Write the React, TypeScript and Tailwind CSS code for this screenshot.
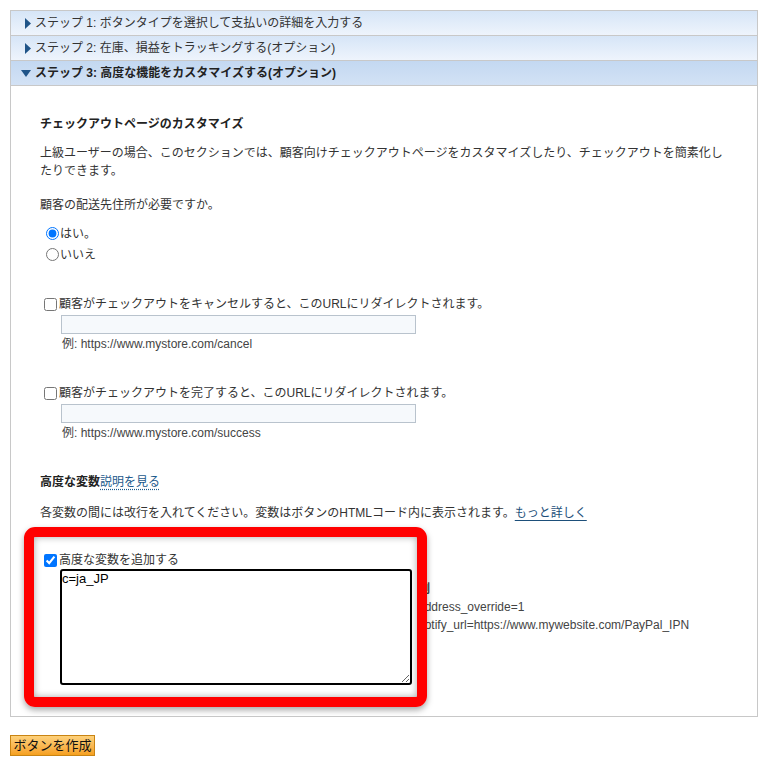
import { useState } from 'react';

const font = "font-['Liberation_Sans','Noto_Sans_CJK_JP',sans-serif]";

function StepHeader({ label, open = false }: { label: string; open?: boolean }) {
  return (
    <div
      className={`flex h-[25px] items-center border-b border-[#c8c8c8] text-[12px] ${
        open
          ? 'bg-gradient-to-b from-[#c3d8f1] to-[#d3e2f5] pl-[10px] font-bold text-[#222]'
          : 'bg-gradient-to-b from-[#d6e5f7] to-[#eef4fc] pl-[14px] text-[#333]'
      }`}
    >
      {open ? (
        <svg width="10" height="7" viewBox="0 0 10 7" className="mr-[4px]">
          <path d="M0 0 L10 0 L5 7 Z" fill="#1f5488" />
        </svg>
      ) : (
        <svg width="6" height="11" viewBox="0 0 6 11" className="mr-[4px]">
          <path d="M0 0 L6 5.5 L0 11 Z" fill="#1f5488" />
        </svg>
      )}
      <span>{label}</span>
    </div>
  );
}

function RedirectField({ label, example }: { label: string; example: string }) {
  return (
    <div>
      <label className="flex h-[18px] items-center">
        <input type="checkbox" className="ml-[4px] mr-[2px] h-[13px] w-[13px]" />
        <span>{label}</span>
      </label>
      <input
        type="text"
        className="mt-[2px] ml-[21px] block h-[19px] w-[355px] border border-[#b9c3cd] bg-[#f6f9fc] outline-none"
      />
      <div className="mt-[2px] ml-[22px] text-[12px] leading-[16px] text-[#444]">{example}</div>
    </div>
  );
}

export default function App() {
  const [shipping, setShipping] = useState('yes');
  const [vars, setVars] = useState('c=ja_JP');

  return (
    <div className={`px-[10px] pt-[10px] text-[12px] leading-[18px] text-[#333] ${font}`}>
      <div className="w-[748px] border-x border-t border-[#c8c8c8]">
        <StepHeader label="ステップ 1: ボタンタイプを選択して支払いの詳細を入力する" />
        <StepHeader label="ステップ 2: 在庫、損益をトラッキングする(オプション)" />
        <StepHeader label="ステップ 3: 高度な機能をカスタマイズする(オプション)" open />

        <div className="border-b border-[#c8c8c8] px-[29px] pt-[29px] pb-[31px]">
          <h3 className="font-bold text-[#222]">チェックアウトページのカスタマイズ</h3>
          <p className="mt-[11px]">
            上級ユーザーの場合、このセクションでは、顧客向けチェックアウトページをカスタマイズしたり、チェックアウトを簡素化したりできます。
          </p>
          <p className="mt-[16px]">顧客の配送先住所が必要ですか。</p>

          <div className="mt-[9px]">
            <label className="flex h-[21px] items-center">
              <input
                type="radio"
                name="ship"
                checked={shipping === 'yes'}
                onChange={() => setShipping('yes')}
                className="ml-[6px] mr-[1px] h-[13px] w-[13px] accent-[#0075ff]"
              />
              <span>はい。</span>
            </label>
            <label className="flex h-[21px] items-center">
              <input
                type="radio"
                name="ship"
                checked={shipping === 'no'}
                onChange={() => setShipping('no')}
                className="ml-[6px] mr-[1px] h-[13px] w-[13px]"
              />
              <span>いいえ</span>
            </label>
          </div>

          <div className="mt-[30px]">
            <RedirectField
              label="顧客がチェックアウトをキャンセルすると、このURLにリダイレクトされます。"
              example="例: https://www.mystore.com/cancel"
            />
          </div>
          <div className="mt-[32px]">
            <RedirectField
              label="顧客がチェックアウトを完了すると、このURLにリダイレクトされます。"
              example="例: https://www.mystore.com/success"
            />
          </div>

          <h3 className="mt-[32px] font-bold text-[#222]">
            高度な変数
            <a href="#" className="font-normal text-[#1d5a8c] underline decoration-dotted underline-offset-[3px]">
              説明を見る
            </a>
          </h3>
          <p className="mt-[13px]">
            各変数の間には改行を入れてください。変数はボタンのHTMLコード内に表示されます。
            <a href="#" className="text-[#1d4f7a] underline underline-offset-[3px]">
              もっと詳しく
            </a>
          </p>

          <div className="relative mt-[29px] flex">
            <div className="w-[372px]">
              <label className="flex h-[18px] items-center">
                <input type="checkbox" defaultChecked className="ml-[4px] mr-[2px] h-[13px] w-[13px] accent-[#0075ff]" />
                <span>高度な変数を追加する</span>
              </label>
              <textarea
                value={vars}
                onChange={(e) => setVars(e.target.value)}
                spellCheck={false}
                className="ml-[20px] block h-[116px] w-[352px] rounded-[3px] border-2 border-black px-0 py-0 text-[13px] leading-[16px] text-black outline-none"
              />
            </div>
            <div className="mt-[29px] ml-[6px] text-[12px] leading-[18px] text-[#444]">
              <div className="font-bold">例</div>
              <div>address_override=1</div>
              <div>notify_url=https://www.mywebsite.com/PayPal_IPN</div>
            </div>

            <div className="pointer-events-none absolute left-[-16px] top-[-24px] h-[180px] w-[403px] rounded-[11px] border-[10px] border-[#ff0000] shadow-[0_3px_6px_rgba(0,0,0,0.35),inset_0_0_7px_rgba(0,0,0,0.35)]" />
          </div>
        </div>
      </div>

      <button className="mt-[18px] h-[21px] w-[85px] border border-[#c98413] bg-gradient-to-b from-[#fdd17a] to-[#f5a01c] text-[13px] leading-[19px] text-[#111]">
        ボタンを作成
      </button>
    </div>
  );
}
